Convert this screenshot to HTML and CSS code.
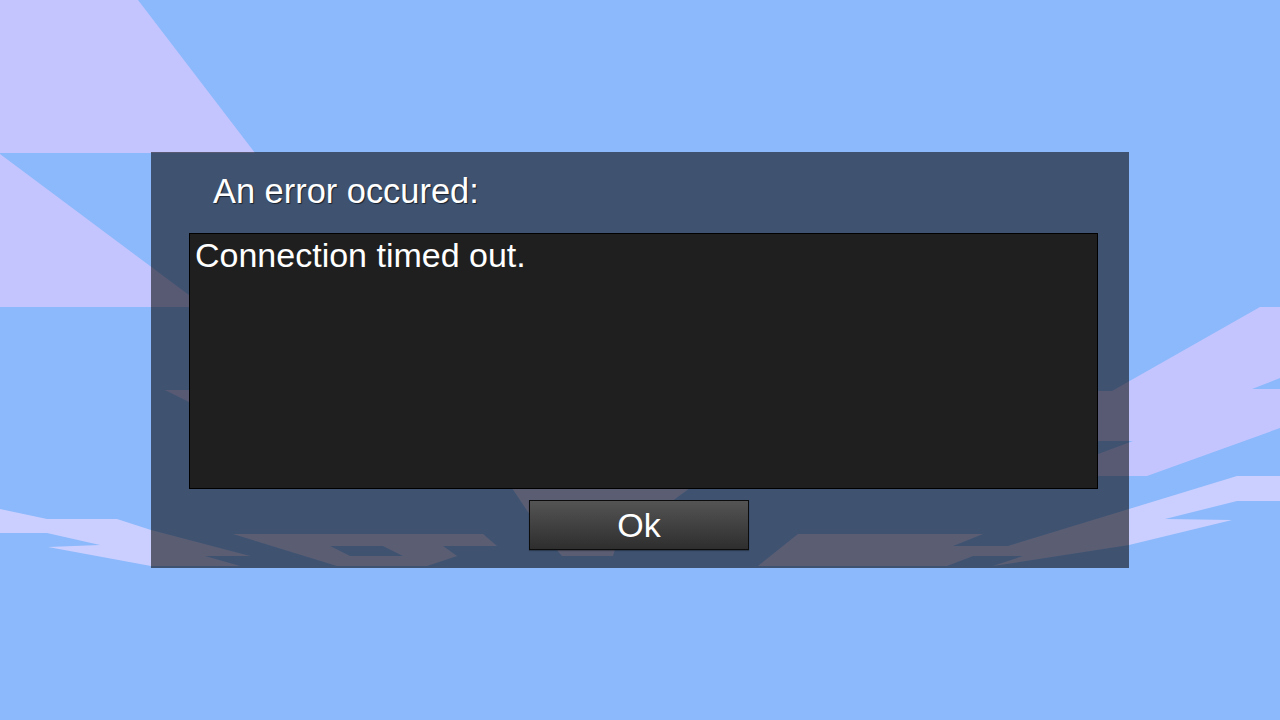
FILE: index.html
```html
<!DOCTYPE html>
<html lang="en">
<head>
    <meta charset="UTF-8">
    <title>Error</title>
    <link rel="stylesheet" href="styles.css">
</head>
<body>
    <svg class="sky" viewBox="0 0 1280 720" width="1280" height="720">
        <polygon class="cloud" points="0,0 138,0 255,153 0,153" />
        <polygon class="cloud" points="0,154 205,307 0,307" />
        <polygon class="cloud" points="165,390 195,390 195,405" />
        <polygon class="cloud" points="1260,307 1280,307 1280,378 1252,389 1280,389 1280,428 1147,476 1090,476 1090,457 1133,441 1090,441 1090,391 1112,391" />
        <polygon class="cloud low" points="1280,476 1237,476 1129,509 1008,546 953,546 983,534 798,534 758,566 947,566 973,556 1023,556 993,566 1129,545 1232,520 1165,519 1237,501 1280,501" />
        <polygon class="cloud low" points="0,509 47,519 117,519 151,530 250,556 205,556 240,566 151,566 48,547 100,545 47,533 0,533" />
        <polygon class="cloud low" points="233,534 483,534 497,546 443,546 457,556 427,566 337,566" />
        <polygon class="gap" points="330,546 383,546 403,556 350,556" />
        <polygon class="cloud low" points="512,488 690,488 660,510 615,549 613,556 562,556 540,530" />
    </svg>

    <div class="dialog">
        <div class="title">An error occured:</div>
        <div class="message">Connection timed out.</div>
        <button class="ok">Ok</button>
    </div>
</body>
</html>
```

FILE: styles.css
```css
body {
    font-family: "Liberation Sans", Arial, sans-serif;
    margin: 0;
    padding: 0;
    display: flex;
    align-items: center;
    justify-content: center;
    height: 100vh;
    overflow: hidden;
    background-color: #8cb9fb;
    position: relative;
}

.sky {
    position: absolute;
    left: 0;
    top: 0;
}

.cloud {
    fill: #c4c5ff;
}

.cloud.low {
    fill: #cbcfff;
}

.gap {
    fill: #8cb9fb;
}

.dialog {
    position: relative;
    width: 978px;
    height: 416px;
    box-sizing: border-box;
    padding-top: 20px;
    background: rgba(0, 0, 0, 0.55);
    color: #fff;
    font-size: 34px;
}

.title {
    font-size: 34.4px;
    line-height: 39px;
    padding-left: 62px;
    text-shadow: 1px 1px 1px rgba(0, 0, 0, 0.6);
}

.message {
    margin: 22px 0 0 38px;
    width: 909px;
    height: 256px;
    box-sizing: border-box;
    padding: 2px 5px 0;
    line-height: 39px;
    background: #1f1f1f;
    border: 1px solid #000;
}

.ok {
    display: block;
    margin: 11px 0 0 378px;
    width: 220px;
    height: 50px;
    padding: 0;
    font-family: inherit;
    font-size: 34px;
    color: #fff;
    background: linear-gradient(#545454, #2e2e2e);
    border: 1px solid #0c0c0c;
    box-shadow: 0 1px 1px rgba(0, 0, 0, 0.3);
}
```
